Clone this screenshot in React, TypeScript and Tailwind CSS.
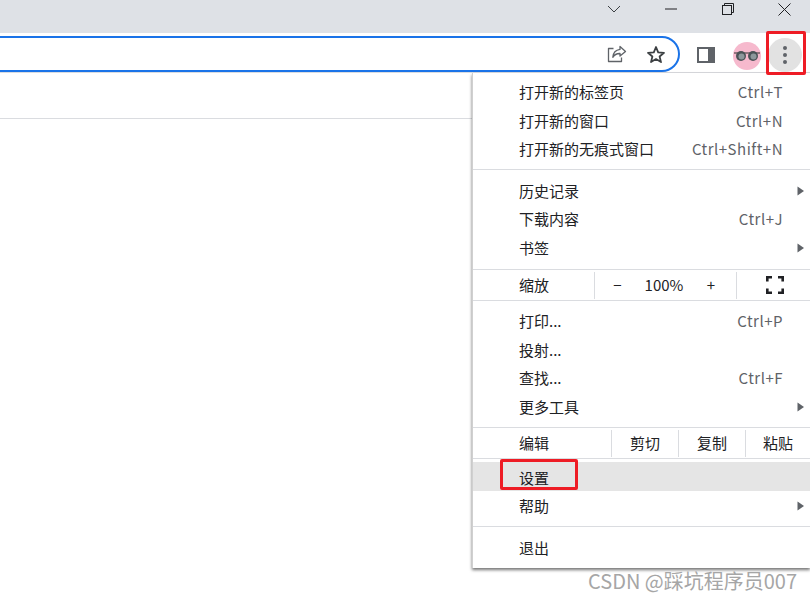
import React from "react";

const FONT = "font-['Noto_Sans_CJK_SC','Noto_Sans',sans-serif]";

function Arrow() {
  return (
    <svg width="8" height="10" viewBox="0 0 8 10" className="absolute right-[5px] top-1/2 -translate-y-1/2">
      <path d="M0.5 0.5 L7 5 L0.5 9.5 Z" fill="#5f6368" />
    </svg>
  );
}

function Row({ label, shortcut, arrow, active, h = "h-[28.5px]" }: { label: string; shortcut?: string; arrow?: boolean; active?: boolean; h?: string }) {
  return (
    <div className={`relative flex items-center justify-between pl-[46px] pr-[27px] ${h} ${active ? "bg-[#e5e5e5] pt-[2px]" : "pb-[1px]"}`}>
      <span className="text-[15px] text-[#202124] leading-none">{label}</span>
      {shortcut && <span className="text-[15px] tracking-[0.5px] text-[#5f6368] leading-none">{shortcut}</span>}
      {arrow && <Arrow />}
    </div>
  );
}

function Sep({ mt, mb }: { mt: string; mb: string }) {
  return <div className={`h-px bg-[#dadce0] ${mt} ${mb}`} />;
}

function Cell({ w, children }: { w: string; children: React.ReactNode }) {
  return (
    <div className={`flex h-full items-center justify-center border-l border-[#dadce0] pb-[2px] text-[15px] text-[#202124] leading-none ${w}`}>
      {children}
    </div>
  );
}

export default function App() {
  return (
    <div className={`relative h-[599px] w-[810px] overflow-hidden bg-white ${FONT}`}>
      {/* title bar */}
      <div className="flex h-[33px] items-start justify-end bg-[#dee1e6] text-[#202124] mr-[-3px]">
        <div className="flex h-[18px] w-[57px] items-center justify-center">
          <svg width="14" height="8" viewBox="0 0 14 8" fill="none" stroke="#3c4043" strokeWidth="1"><path d="M1 1 L7 7 L13 1" /></svg>
        </div>
        <div className="flex h-[18px] w-[57px] items-center justify-center">
          <svg width="12" height="2" viewBox="0 0 12 2" stroke="#202124" strokeWidth="1"><path d="M0 1 H12" /></svg>
        </div>
        <div className="flex h-[18px] w-[57px] items-center justify-center">
          <svg width="12" height="12" viewBox="0 0 12 12" fill="none" stroke="#202124" strokeWidth="1"><rect x="0.5" y="2.5" width="9" height="9" /><path d="M2.5 2.5 V0.5 H11.5 V9.5 H9.5" /></svg>
        </div>
        <div className="flex h-[18px] w-[57px] items-center justify-center">
          <svg width="13" height="13" viewBox="0 0 13 13" fill="none" stroke="#202124" strokeWidth="1"><path d="M0.5 0.5 L12.5 12.5 M12.5 0.5 L0.5 12.5" /></svg>
        </div>
      </div>

      {/* toolbar */}
      <div className="flex h-[40px] items-end border-b border-[#dadce0] bg-white">
        <div className="ml-[-30px] flex h-[36px] w-[710px] items-center justify-end gap-[19px] rounded-[18px] border-2 border-[#1a73e8] pr-[12px]">
          <svg width="20" height="18" viewBox="0 0 20 18" fill="none" stroke="#5f6368" strokeWidth="1.3" strokeLinejoin="round">
            <path d="M13 1.5 L18.5 6.5 L13 11 V8.5 C9.5 8.3 7.5 9.6 5.8 12.3 C6.2 7.8 8.6 5 13 4.4 Z" />
            <path d="M6.5 3.5 H1.5 V16.5 H14.5 V12.5" />
          </svg>
          <svg width="20" height="19" viewBox="0 0 20 19" fill="none" stroke="#3c4043" strokeWidth="1.8" strokeLinejoin="round">
            <path d="M10 2 L12.2 7.3 L18 7.8 L13.6 11.5 L15 17.1 L10 14.1 L5 17.1 L6.4 11.5 L2 7.8 L7.8 7.3 Z" />
          </svg>
        </div>
        <div className="ml-[17px] mb-[8px] flex h-[18px] w-[18px] items-center justify-center">
          <svg width="18" height="18" viewBox="0 0 18 18"><path fillRule="evenodd" fill="#5f6368" d="M0 1 H18 V17 H0 Z M2 3 V15 H11 V3 Z" /></svg>
        </div>
        <div className="ml-[18px] mb-[2px] flex h-[28px] w-[28px] items-center justify-center rounded-full bg-[#f6b9cd]">
          <svg width="26" height="12" viewBox="0 0 26 12">
            <path d="M0 3 H26" stroke="#333" strokeWidth="1" />
            <circle cx="7" cy="6" r="5" fill="#4b5357" />
            <circle cx="19" cy="6" r="5" fill="#4b5357" />
            <circle cx="7.5" cy="6.5" r="3" fill="#8d979b" />
            <circle cx="19.5" cy="6.5" r="3" fill="#8d979b" />
          </svg>
        </div>
        <div className="ml-[7px] flex h-[34px] w-[34px] items-center justify-center rounded-full bg-[#e2e2e2]">
          <div className="flex flex-col gap-[3px]">
            <span className="h-[4px] w-[4px] rounded-full bg-[#5f6368]" />
            <span className="h-[4px] w-[4px] rounded-full bg-[#5f6368]" />
            <span className="h-[4px] w-[4px] rounded-full bg-[#5f6368]" />
          </div>
        </div>
      </div>

      {/* bookmarks bar */}
      <div className="h-[46px] border-b border-[#dadce0] bg-white" />

      {/* menu */}
      <div className="absolute left-[472px] top-[73px] h-[495px] w-[338px] border-l border-[#d0d0d0] bg-white pt-[5px] shadow-[0_2px_3px_rgba(0,0,0,0.55)]">
        <Row label="打开新的标签页" shortcut="Ctrl+T" />
        <Row label="打开新的窗口" shortcut="Ctrl+N" />
        <Row label="打开新的无痕式窗口" shortcut="Ctrl+Shift+N" />
        <Sep mt="mt-[5px]" mb="mb-[7px]" />
        <Row label="历史记录" arrow />
        <Row label="下载内容" shortcut="Ctrl+J" />
        <Row label="书签" arrow />
        <Sep mt="mt-[7px]" mb="mb-0" />
        <div className="flex h-[30px] items-center">
          <div className="flex w-[121px] items-center pb-[2px] pl-[46px] text-[15px] leading-none text-[#202124]">缩放</div>
          <div className="flex h-[27px] w-[142px] items-center border-l border-[#dadce0] pb-[2px] text-[15px] leading-none text-[#202124]">
            <span className="w-[45px] text-center">−</span>
            <span className="w-[48px] text-center">100%</span>
            <span className="w-[46px] text-center">+</span>
          </div>
          <div className="flex h-[27px] flex-1 items-center justify-center border-l border-[#dadce0] pl-[2px]">
            <svg width="18" height="18" viewBox="0 0 18 18" fill="none" stroke="#202124" strokeWidth="2.6">
              <path d="M1.3 5.5 V1.3 H6 M12 1.3 H16.7 V5.5 M16.7 12.5 V16.7 H12 M6 16.7 H1.3 V12.5" />
            </svg>
          </div>
        </div>
        <Sep mt="mt-0" mb="mb-[6px]" />
        <Row label="打印..." shortcut="Ctrl+P" />
        <Row label="投射..." />
        <Row label="查找..." shortcut="Ctrl+F" />
        <Row label="更多工具" arrow />
        <Sep mt="mt-[6px]" mb="mb-0" />
        <div className="flex h-[30px] items-center">
          <div className="flex w-[138px] items-center pb-[2px] pl-[46px] text-[15px] leading-none text-[#202124]">编辑</div>
          <div className="flex h-[27px] flex-1">
            <Cell w="w-[67px]">剪切</Cell>
            <Cell w="w-[67px]">复制</Cell>
            <Cell w="flex-1">粘贴</Cell>
          </div>
        </div>
        <Sep mt="mt-0" mb="mb-[3px]" />
        <Row label="设置" active h="h-[29px]" />
        <Row label="帮助" arrow h="h-[29px]" />
        <Sep mt="mt-[6px]" mb="mb-[7px]" />
        <Row label="退出" />
      </div>

      {/* annotations */}
      <div className="absolute left-[766px] top-[31px] h-[44px] w-[40px] rounded-[2px] border-[3px] border-[#ee1c25]" />
      <div className="absolute left-[500px] top-[459px] h-[31px] w-[78px] rounded-[2px] border-[3px] border-[#ee1c25]" />
      <div className="absolute left-[588px] top-[568px] text-[20px] leading-[26px] text-[#a6a6a6]">CSDN @踩坑程序员007</div>
    </div>
  );
}
